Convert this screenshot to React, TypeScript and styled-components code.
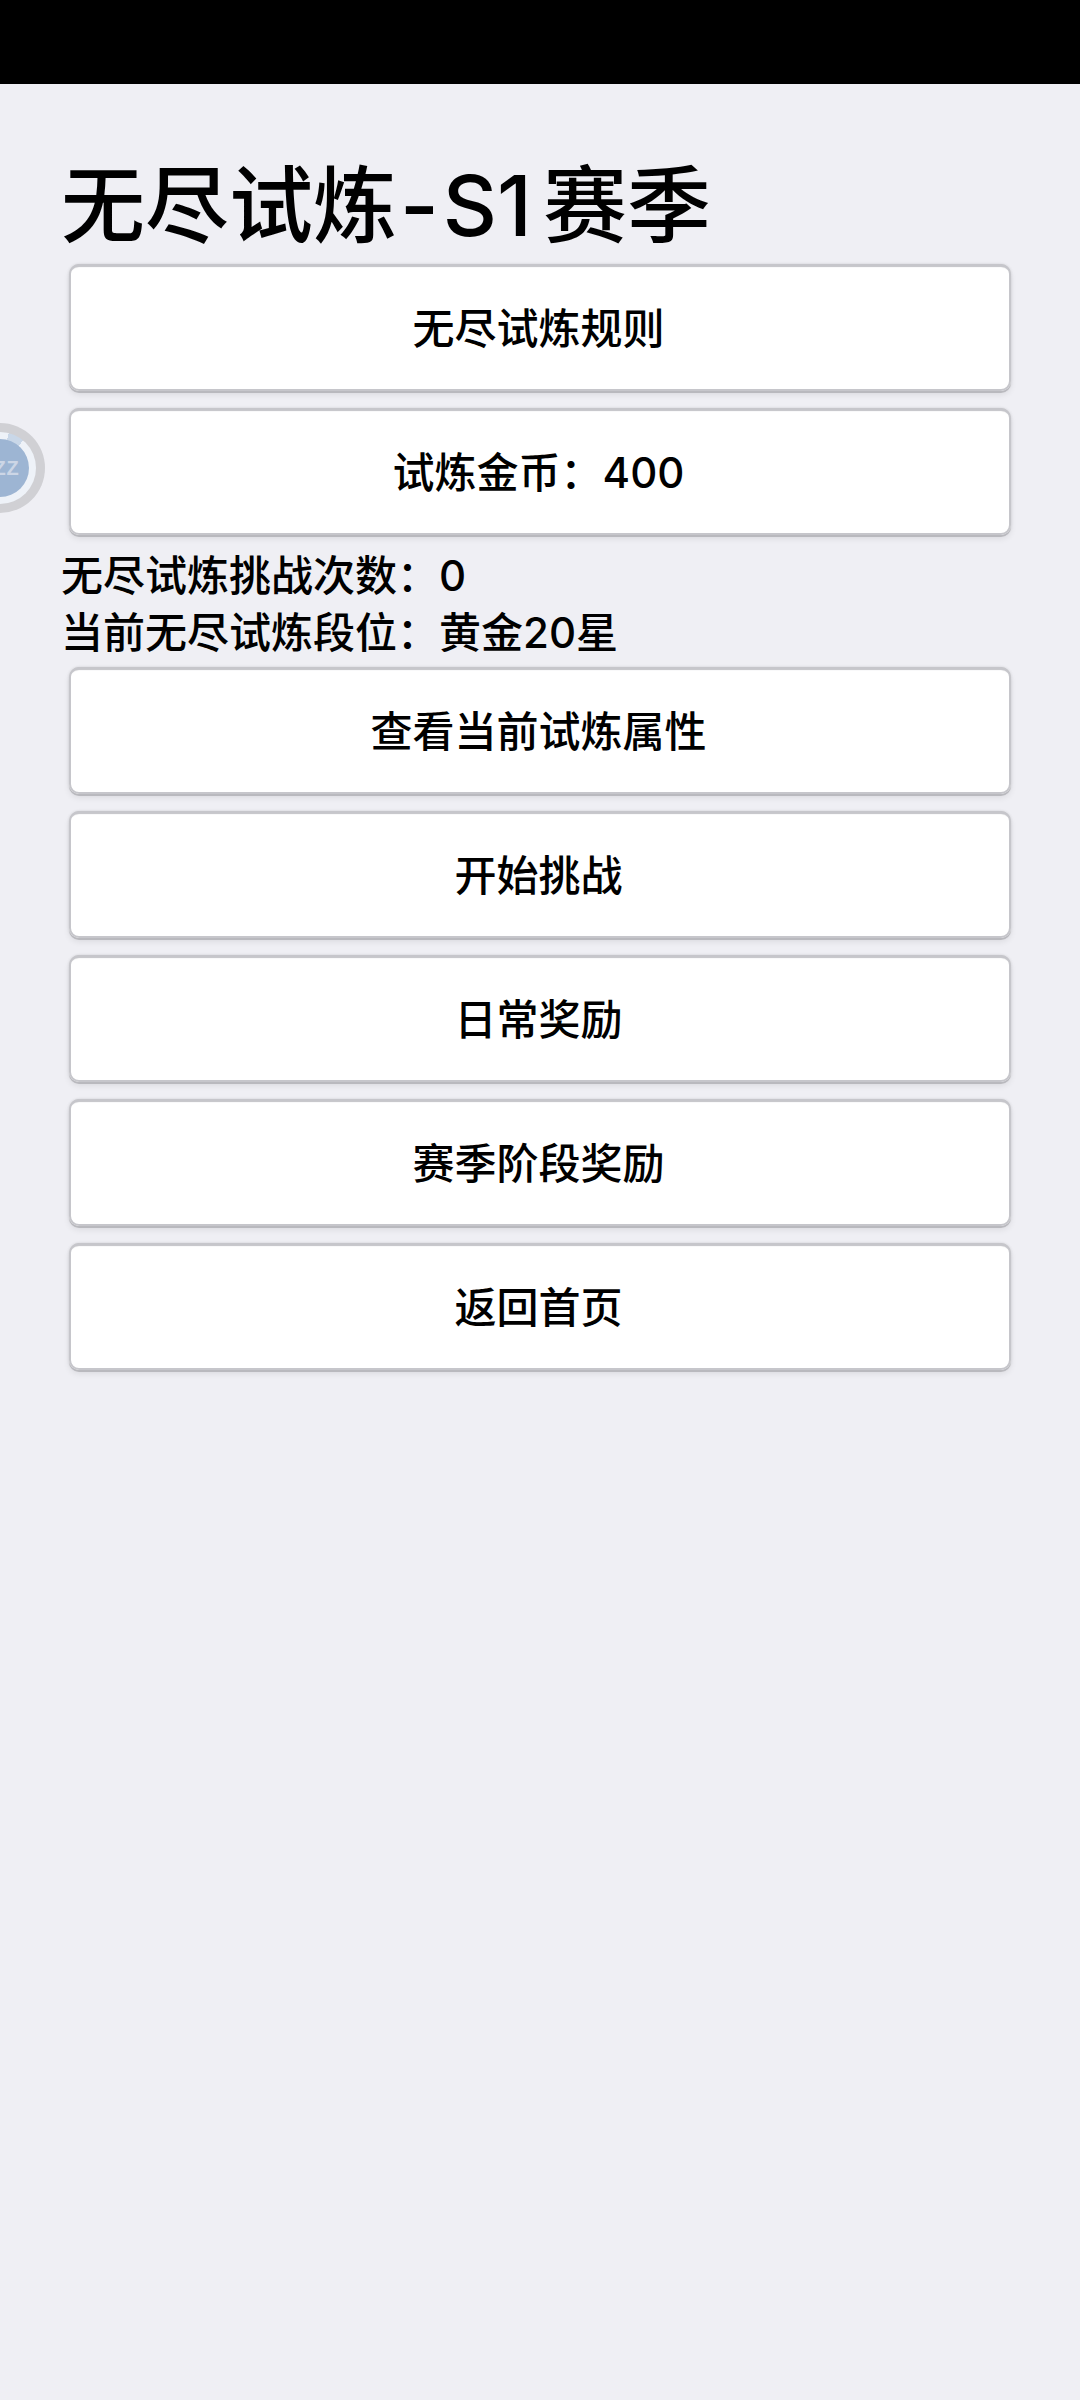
import styled, { createGlobalStyle } from "styled-components";

const GlobalStyle = createGlobalStyle`
  html, body {
    margin: 0;
    padding: 0;
    background: #efeff4;
  }
  body {
    font-family: Inter, "Noto Sans CJK SC", sans-serif;
    font-weight: 500;
    color: #000;
  }
`;

const Page = styled.div`
  position: relative;
  width: 1080px;
  height: 2400px;
  overflow: hidden;
  background: #efeff4;
`;

const StatusBar = styled.div`
  height: 84px;
  background: #000;
`;

const Content = styled.div`
  display: flex;
  flex-direction: column;
  padding: 75px 69px 0 61px;
`;

const Title = styled.h1`
  margin: 0 0 11px;
  font-size: 84px;
  line-height: 94px;
  font-weight: 500;
  white-space: nowrap;
`;

const TitleDash = styled.span`
  padding: 0 4px 0 3px;
`;

const TitleSeason = styled.span`
  padding-right: 11px;
`;

const ActionList = styled.div`
  display: flex;
  flex-direction: column;
  gap: 17px;
  margin-left: 8px;
`;

const ActionButton = styled.button`
  height: 127px;
  padding: 0 3px 4px 0;
  border: 0;
  border-radius: 10px;
  background: #fff;
  color: #000;
  font: inherit;
  font-size: 42px;
  box-shadow: inset 0 0 0 2px #c6c6cb, inset 0 3px 1px #c2c2c7, 0 2px 0 #b9b9be, 0 4px 6px rgba(0, 0, 0, 0.08),
    0 0 3px rgba(0, 0, 0, 0.12);
`;

const InfoBlock = styled.div`
  margin: 12px 0 6px;
`;

const InfoLine = styled.div`
  font-size: 42px;
  line-height: 57px;
`;

const FloatBadge = styled.div`
  position: absolute;
  left: -45px;
  top: 423px;
  width: 90px;
  height: 90px;
  border-radius: 50%;
  background: #d0d0d4;
  display: flex;
  align-items: center;
  justify-content: center;
`;

const BadgeRing = styled.div`
  width: 72px;
  height: 72px;
  border-radius: 50%;
  background: conic-gradient(#eef2f8 0 14deg, #c9d7e8 14deg 40deg, #eef2f8 40deg);
  display: flex;
  align-items: center;
  justify-content: center;
`;

const BadgeInner = styled.div`
  width: 58px;
  height: 58px;
  border-radius: 50%;
  background: #9db5d3;
  display: flex;
  align-items: center;
  justify-content: center;
  color: #ccd6e6;
  font-family: "Liberation Sans", sans-serif;
  font-size: 20px;
  font-weight: 700;
  letter-spacing: 1px;
`;

const App = () => (
  <Page>
    <GlobalStyle />
    <StatusBar />
    <FloatBadge>
      <BadgeRing>
        <BadgeInner>ZZZ</BadgeInner>
      </BadgeRing>
    </FloatBadge>
    <Content>
      <Title>
        无尽试炼<TitleDash>-</TitleDash>
        <TitleSeason>S1</TitleSeason>赛季
      </Title>
      <ActionList>
        <ActionButton>无尽试炼规则</ActionButton>
        <ActionButton>试炼金币：400</ActionButton>
      </ActionList>
      <InfoBlock>
        <InfoLine>无尽试炼挑战次数：0</InfoLine>
        <InfoLine>当前无尽试炼段位：黄金20星</InfoLine>
      </InfoBlock>
      <ActionList>
        <ActionButton>查看当前试炼属性</ActionButton>
        <ActionButton>开始挑战</ActionButton>
        <ActionButton>日常奖励</ActionButton>
        <ActionButton>赛季阶段奖励</ActionButton>
        <ActionButton>返回首页</ActionButton>
      </ActionList>
    </Content>
  </Page>
);

export default App;
